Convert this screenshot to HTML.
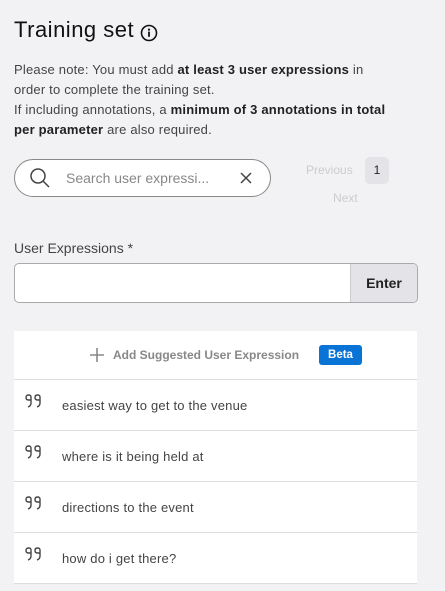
<!DOCTYPE html>
<html><head><style>
body{margin:0;width:445px;height:591px;background:#f2f2f4;font-family:"Liberation Sans",sans-serif;color:#222;position:relative;overflow:hidden}
.a{position:absolute}
.q{position:absolute;left:11px;top:14px}
.t{position:absolute;left:48px;top:18px;font-size:13px;color:#444;letter-spacing:0.2px}
</style></head><body>
<div class="a" style="left:14px;top:17px;font-size:22px;color:#111;letter-spacing:0.5px">Training set</div>
<svg class="a" style="left:140px;top:24px" width="18" height="18" viewBox="0 0 18 18"><circle cx="9" cy="9" r="7.5" fill="none" stroke="#111" stroke-width="1.6"/><circle cx="9" cy="5.6" r="1.1" fill="#111"/><rect x="8.1" y="7.6" width="1.8" height="5.2" fill="#111"/></svg>
<div class="a" style="left:14px;top:60px;width:378px;font-size:13px;line-height:20px;color:#444;letter-spacing:0.2px">Please note: You must add <b style="color:#222">at least 3 user expressions</b> in order to complete the training set.<br>If including annotations, a <b style="color:#222">minimum of 3 annotations in total per parameter</b> are also required.</div>
<div class="a" style="left:14px;top:159px;width:255px;height:36px;border:1px solid #888;border-radius:20px;background:#fff"></div>
<svg class="a" style="left:29px;top:167px" width="22" height="22" viewBox="0 0 22 22"><circle cx="9" cy="9" r="7" fill="none" stroke="#444" stroke-width="1.5"/><line x1="14" y1="14" x2="20" y2="20" stroke="#444" stroke-width="1.5"/></svg>
<div class="a" style="left:66px;top:170px;font-size:14px;color:#888">Search user expressi...</div>
<svg class="a" style="left:239px;top:171px" width="14" height="14"><path d="M2 2L12 12M12 2L2 12" stroke="#444" stroke-width="1.5"/></svg>
<div class="a" style="left:306px;top:163px;font-size:12px;color:#ccc">Previous</div>
<div class="a" style="left:365px;top:157px;width:24px;height:27px;background:#e4e4e8;border-radius:5px;font-size:12px;text-align:center;line-height:27px">1</div>
<div class="a" style="left:333px;top:191px;font-size:12px;color:#ccc">Next</div>
<div class="a" style="left:14px;top:240px;font-size:14px;color:#444">User Expressions *</div>
<div class="a" style="left:14px;top:263px;width:402px;height:38px;border:1px solid #aaa;border-radius:5px;background:#fff;overflow:hidden"><div style="position:absolute;right:0;top:0;width:66px;height:38px;background:#e4e4e8;border-left:1px solid #ccc;font-size:14px;line-height:38px;text-align:center;color:#222;font-weight:bold">Enter</div></div>
<div class="a" style="left:14px;top:331px;width:403px;height:252px;background:#fff">
<div style="height:48px;border-bottom:1px solid #ddd;position:relative">
<svg style="position:absolute;left:76px;top:17px" width="14" height="14"><path d="M7 0V14M0 7H14" stroke="#888" stroke-width="1.6"/></svg>
<div style="position:absolute;left:99px;top:17px;font-size:12px;color:#888;font-weight:bold">Add Suggested User Expression</div>
<div style="position:absolute;left:305px;top:14px;width:43px;height:20px;background:#0a74d6;border-radius:3px;color:#fff;font-size:11.5px;font-weight:bold;text-align:center;line-height:20px">Beta</div>
</div>
<div style="height:50px;border-bottom:1px solid #ddd;position:relative"><svg class="q" width="18" height="14"><path d="M6 6V3Q6 1 3.5 1Q1 1 1 3.5Q1 6 3.5 6H6V9Q6 12 3 13M15 6V3Q15 1 12.5 1Q10 1 10 3.5Q10 6 12.5 6H15V9Q15 12 12 13" fill="none" stroke="#444" stroke-width="1.4"/></svg><span class="t">easiest way to get to the venue</span></div>
<div style="height:50px;border-bottom:1px solid #ddd;position:relative"><svg class="q" width="18" height="14"><path d="M6 6V3Q6 1 3.5 1Q1 1 1 3.5Q1 6 3.5 6H6V9Q6 12 3 13M15 6V3Q15 1 12.5 1Q10 1 10 3.5Q10 6 12.5 6H15V9Q15 12 12 13" fill="none" stroke="#444" stroke-width="1.4"/></svg><span class="t">where is it being held at</span></div>
<div style="height:50px;border-bottom:1px solid #ddd;position:relative"><svg class="q" width="18" height="14"><path d="M6 6V3Q6 1 3.5 1Q1 1 1 3.5Q1 6 3.5 6H6V9Q6 12 3 13M15 6V3Q15 1 12.5 1Q10 1 10 3.5Q10 6 12.5 6H15V9Q15 12 12 13" fill="none" stroke="#444" stroke-width="1.4"/></svg><span class="t">directions to the event</span></div>
<div style="height:50px;border-bottom:1px solid #ddd;position:relative"><svg class="q" width="18" height="14"><path d="M6 6V3Q6 1 3.5 1Q1 1 1 3.5Q1 6 3.5 6H6V9Q6 12 3 13M15 6V3Q15 1 12.5 1Q10 1 10 3.5Q10 6 12.5 6H15V9Q15 12 12 13" fill="none" stroke="#444" stroke-width="1.4"/></svg><span class="t">how do i get there?</span></div>
</div>
</body></html>
